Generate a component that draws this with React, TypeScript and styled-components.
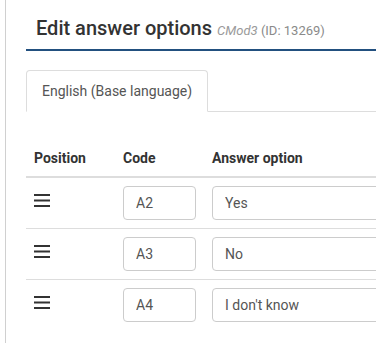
import styled, { createGlobalStyle } from "styled-components";

const GlobalStyle = createGlobalStyle`
  html, body {
    margin: 0;
    padding: 0;
    background: #fff;
    overflow: hidden;
  }
  body {
    font-family: Roboto, "Liberation Sans", sans-serif;
    font-size: 14px;
    color: #333;
  }
`;

interface answerOption {
  code: string;
  answer: string;
}

const options: answerOption[] = [
  { code: "A2", answer: "Yes" },
  { code: "A3", answer: "No" },
  { code: "A4", answer: "I don't know" },
];

function BarsIcon() {
  return (
    <svg width="16" height="14" viewBox="0 0 16 14">
      <rect x="0" y="1" width="16" height="2" fill="#333" />
      <rect x="0" y="6.5" width="16" height="2" fill="#333" />
      <rect x="0" y="12" width="16" height="2" fill="#333" />
    </svg>
  );
}

export default function App() {
  return (
    <>
      <GlobalStyle />
      <Panel>
        <Heading>
          <Title>Edit answer options</Title>
          <SubTitle>
            <em>CMod3</em> (ID: 13269)
          </SubTitle>
        </Heading>
        <Tabs>
          <Tab>English (Base language)</Tab>
        </Tabs>
        <Table>
          <colgroup>
            <col style={{ width: 89 }} />
            <col style={{ width: 89 }} />
            <col />
          </colgroup>
          <thead>
            <tr>
              <HeadCell>Position</HeadCell>
              <HeadCell>Code</HeadCell>
              <HeadCell>Answer option</HeadCell>
            </tr>
          </thead>
          <tbody>
            {options.map((o) => (
              <Row key={o.code}>
                <Cell>
                  <Handle>
                    <BarsIcon />
                  </Handle>
                </Cell>
                <Cell>
                  <CodeInput defaultValue={o.code} />
                </Cell>
                <Cell>
                  <AnswerInput defaultValue={o.answer} />
                </Cell>
              </Row>
            ))}
          </tbody>
        </Table>
      </Panel>
    </>
  );
}

const Panel = styled.div`
  margin-left: 5px;
  border-left: 1px solid #d0d0d0;
  padding: 15px 0 13px 20px;
  width: 600px;
`;

const Heading = styled.div`
  display: flex;
  align-items: baseline;
  gap: 5px;
  padding: 0 10px 8px;
  border-bottom: 2px solid #22507f;
`;

const Title = styled.h3`
  margin: 0;
  font-size: 20px;
  font-weight: 500;
  line-height: 26px;
  color: #333;
`;

const SubTitle = styled.small`
  font-size: 13px;
  color: #8a8a8a;

  em {
    font-style: italic;
    color: #9a9a9a;
  }
`;

const Tabs = styled.div`
  display: flex;
  margin-top: 19px;
  border-bottom: 1px solid #ddd;
`;

const Tab = styled.div`
  padding: 10px 15px;
  line-height: 20px;
  color: #555;
  background: #fff;
  border: 1px solid #ddd;
  border-bottom-color: transparent;
  border-radius: 4px 4px 0 0;
  margin-bottom: -1px;
`;

const Table = styled.table`
  margin-top: 28px;
  border-collapse: collapse;
  table-layout: fixed;
  width: 100%;
`;

const HeadCell = styled.th`
  padding: 8px;
  text-align: left;
  font-weight: 700;
  line-height: 20px;
  color: #333;
  border-bottom: 2px solid #ddd;
`;

const Row = styled.tr`
  & + & td {
    border-top: 1px solid #ddd;
  }
`;

const Cell = styled.td`
  padding: 8px;
  vertical-align: top;
`;

const Handle = styled.div`
  display: flex;
  align-items: center;
  height: 28px;
`;

const Input = styled.input`
  box-sizing: border-box;
  display: block;
  height: 34px;
  padding: 6px 12px;
  font-family: Roboto, "Liberation Sans", sans-serif;
  font-size: 14px;
  color: #555;
  border: 1px solid #ccc;
  border-radius: 4px;
  background: #fff;
  outline: none;
`;

const CodeInput = styled(Input)`
  width: 73px;
`;

const AnswerInput = styled(Input)`
  width: 100%;
`;
